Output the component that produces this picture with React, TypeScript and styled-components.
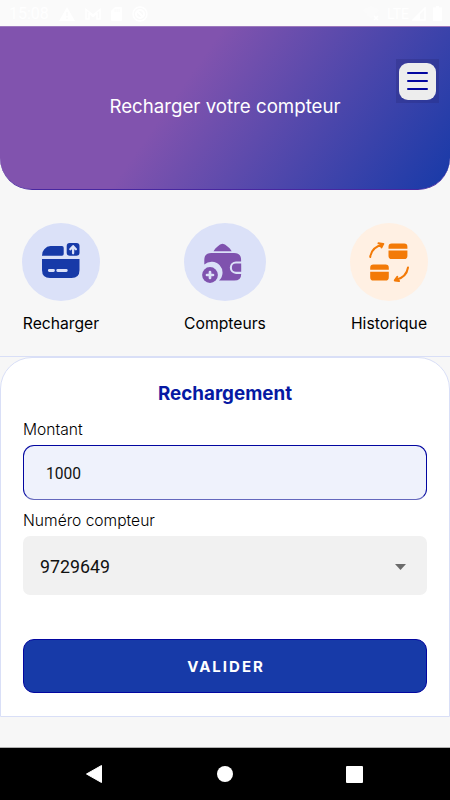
import React from "react";
import styled, { createGlobalStyle } from "styled-components";

const GlobalStyle = createGlobalStyle`
  * { box-sizing: border-box; }
  body { margin: 0; background: #f7f7f7; font-family: Inter, "Liberation Sans", sans-serif; color: #111; }
  button, input { font: inherit; }
`;

const Screen = styled.div`
  width: 450px;
  height: 800px;
  display: flex;
  flex-direction: column;
  background: #f7f7f7;
  overflow: hidden;
`;

const StatusBar = styled.div`
  height: 26px;
  flex: none;
  display: flex;
  align-items: center;
  justify-content: space-between;
  padding: 1px 8px 0 9px;
  background: #fafafa;
  color: #fff;
  font: 16px/26px Roboto, sans-serif;
`;

const StatusGroup = styled.div<{ $gap: number }>`
  display: flex;
  align-items: center;
  gap: ${(p) => p.$gap}px;
`;

const Clock = styled.span`
  margin-right: 0;
`;

const Network = styled.span`
  font-size: 14px;
  margin-right: -4px;
`;

const Header = styled.header`
  height: 164px;
  flex: none;
  display: grid;
  grid-template-columns: 54px 1fr 54px;
  background: linear-gradient(125deg, #8153ae 39.7%, #173aa8 100%);
  border-top: 1px solid #9c79bd;
  border-bottom: 1px solid #4827a0;
  border-radius: 0 0 32px 32px;
`;

const HeaderTitle = styled.h1`
  grid-column: 2;
  margin: 67px 0 0;
  text-align: center;
  font-size: 18.7px;
  line-height: 26px;
  font-weight: 400;
  color: #fff;
  white-space: nowrap;
`;

const MenuShade = styled.div`
  width: 43px;
  height: 44px;
  margin-top: 32px;
  display: grid;
  place-items: center;
  background: rgba(40, 40, 120, 0.3);
`;

const MenuButton = styled.button`
  width: 37px;
  height: 37px;
  padding: 0;
  border: 0;
  border-radius: 9px;
  background: #ededed;
  display: flex;
  flex-direction: column;
  align-items: center;
  justify-content: center;
  gap: 6px;
`;

const MenuLine = styled.span`
  width: 21px;
  height: 2px;
  border-radius: 1px;
  background: #0206a0;
`;

const Actions = styled.nav`
  height: 167px;
  flex: none;
  display: flex;
  justify-content: space-between;
  align-items: flex-start;
  padding: 33px 22px 0;
  border-bottom: 1px solid #d9dff7;
`;

const Action = styled.div<{ $width: number }>`
  width: ${(p) => p.$width}px;
  display: flex;
  flex-direction: column;
  align-items: center;
`;

const ActionIcon = styled.div<{ $bg: string }>`
  width: 100%;
  height: 78px;
  border-radius: 50%;
  background: ${(p) => p.$bg};
  svg { display: block; width: 100%; height: 78px; }
`;

const ActionLabel = styled.span`
  margin-top: 12px;
  font-size: 15.7px;
  line-height: 22px;
  white-space: nowrap;
  color: #000;
`;

const Card = styled.section`
  height: 360px;
  flex: none;
  display: flex;
  flex-direction: column;
  padding: 0 22px;
  background: #fff;
  border: 1px solid #d9dff7;
  border-radius: 32px 32px 0 0;
`;

const CardTitle = styled.h2`
  margin: 23px 0 0;
  text-align: center;
  font-size: 18.8px;
  line-height: 26px;
  font-weight: 700;
  color: #0619a3;
`;

const Label = styled.label<{ $top: number }>`
  margin-top: ${(p) => p.$top}px;
  font-size: 15.6px;
  line-height: 22px;
  font-weight: 300;
  color: #000;
`;

const AmountInput = styled.input`
  height: 55px;
  width: 100%;
  margin-top: 4px;
  padding: 2px 22px 0;
  border: 1px solid #0206a0;
  border-bottom-color: #6468bd;
  border-radius: 11px;
  outline: 0;
  background: #eff2fc;
  font: 400 15.6px Roboto, sans-serif;
  color: #111;
`;

const MeterSelect = styled.div`
  height: 59px;
  margin-top: 4px;
  padding: 2px 21px 0 17px;
  display: flex;
  align-items: center;
  justify-content: space-between;
  border-radius: 7px;
  background: #f1f1f1;
  font: 17.8px Roboto, sans-serif;
  color: #111;
`;

const SubmitButton = styled.button`
  height: 54px;
  margin-top: 44px;
  padding: 0 0 0 2px;
  border: 1px solid #0206a0;
  border-radius: 11px;
  background: #173aa8;
  color: #fff;
  font-size: 15px;
  font-weight: 700;
  letter-spacing: 2px;
`;

const NavBar = styled.footer`
  height: 53px;
  margin-top: auto;
  flex: none;
  display: flex;
  align-items: center;
  justify-content: space-between;
  padding: 0 87px 0 85px;
  background: #000;
  border-top: 1px solid #b0b0b0;
`;

const WarningIcon = () => (
  <svg width="16" height="14" viewBox="0 0 16 14">
    <path d="M8 0L16 14H0Z" fill="#fff" />
    <path d="M8 5v4M8 10.500v1.500" stroke="#fafafa" strokeWidth="1.500" />
  </svg>
);

const MailIcon = () => (
  <svg width="16" height="12" viewBox="0 0 16 12" fill="none" stroke="#fff" strokeWidth="1.500">
    <path d="M1 11V1.500L8 7l7-5.500V11h-3V5L8 8.500 4 5v6Z" />
  </svg>
);

const CardIcon = () => (
  <svg width="11" height="14" viewBox="0 0 11 14">
    <path d="M4 0h6a1 1 0 011 1v12a1 1 0 01-1 1H1a1 1 0 01-1-1V4Z" fill="#fff" />
    <path d="M4 2v3M6 2v3M8 2v3" stroke="#fafafa" />
  </svg>
);

const BlockIcon = () => (
  <svg width="16" height="16" viewBox="0 0 16 16" fill="none" stroke="#fff">
    <circle cx="8" cy="8" r="7" strokeWidth="1.500" />
    <circle cx="8" cy="8" r="4" strokeWidth="2" />
    <path d="M5 5l6 6" strokeWidth="2" />
  </svg>
);

const WifiIcon = () => (
  <svg width="17" height="15" viewBox="0 0 17 15">
    <path d="M0 4Q8 -3 16 4L8 13Z" fill="#fbfbfb" />
    <path d="M11 10l4 4M15 10l-4 4" stroke="#fff" strokeWidth="1.500" />
  </svg>
);

const SignalIcon = () => (
  <svg width="14" height="14" viewBox="0 0 14 14">
    <path d="M13 1V13H1Z" fill="none" stroke="#fff" strokeWidth="1.500" />
    <path d="M8 6V13H1Z" fill="#fff" />
  </svg>
);

const BatteryIcon = () => (
  <svg width="9" height="15" viewBox="0 0 9 15">
    <path d="M3 0h3v1.500h3V15H0V1.500h3Z" fill="#fff" />
  </svg>
);

const RechargeIcon = () => (
  <svg viewBox="0 0 78 78">
    <g fill="#173aa8">
      <path d="M20 32.700Q20 28.500 22.300 26.200 25 23 28.500 23H40q1.700 0 1.700 1.700v6.300q0 1.700-1.700 1.700Z" />
      <rect x="44.700" y="20" width="12.800" height="12.700" rx="3" />
      <path d="M20 36h37.500v11q0 8-8 8H28q-8 0-8-8Z" />
    </g>
    <path d="M51.100 30.300v-6.500M48.300 26.200l2.800-3 2.800 3" fill="none" stroke="#dbe1f8" strokeWidth="2.300" strokeLinecap="round" strokeLinejoin="round" />
    <path d="M27.300 47.500h4.200M35.700 47.500h8.600" stroke="#dbe1f8" strokeWidth="2.800" strokeLinecap="round" />
  </svg>
);

const WalletIcon = () => (
  <svg viewBox="0 0 82 78">
    <path d="M29.500 28.200Q31.200 25.200 33.600 23.600 36 20.800 38.500 20.800T43.500 23.600Q46 25.200 47.700 28.200Z" fill="#7f52ae" />
    <path d="M20.300 41.500V37q0-7 7-7h22.800q7 0 7 7v1.500H52a6.200 6.200 0 000 12.400h5.200q0 6.700-7 6.700H35A10.500 10.500 0 0020.300 41.500Z" fill="#7f52ae" />
    <path d="M57.200 40.600H52a4.100 4.100 0 000 8.200h5.200Z" fill="#7f52ae" />
    <circle cx="26" cy="52" r="9.800" fill="#dbe1f8" />
    <circle cx="26" cy="52" r="7.900" fill="#7f52ae" />
    <path d="M26 49v6M23 52h6" stroke="#dbe1f8" strokeWidth="2.700" strokeLinecap="round" />
  </svg>
);

const HistoryIcon = () => (
  <svg viewBox="0 0 78 78">
    <g fill="#f37a07">
      <path d="M38.500 25.700v-2q0-3.200 3.200-3.200h12.500q3.200 0 3.200 3.200v2ZM38.500 27.600h18.900v5.300q0 3.100-3.200 3.100H41.700q-3.200 0-3.200-3.100Z" />
      <path d="M20.200 46.700v-2q0-3.200 3.200-3.200h12.200q3.200 0 3.200 3.200v2ZM20.200 48.700h18.600v5.500q0 3.400-3.200 3.400H23.400q-3.200 0-3.200-3.400Z" />
    </g>
    <g fill="none" stroke="#f37a07" strokeWidth="2" strokeLinecap="round" strokeLinejoin="round">
      <path d="M20.200 34Q21.500 24 33 21.500M28.500 20.300l4.800.6-1.800 3.500" />
      <path d="M58 44.500Q56.500 54.500 45.500 57M47.300 53.800l-2.500 3.600 4.200.6" />
    </g>
  </svg>
);

const actions = [
  { label: "Recharger", width: 78, bg: "#dbe1f8", Icon: RechargeIcon },
  { label: "Compteurs", width: 82, bg: "#dbe1f8", Icon: WalletIcon },
  { label: "Historique", width: 78, bg: "#fff0e3", Icon: HistoryIcon },
];

export default function App() {
  return (
    <>
      <GlobalStyle />
      <Screen>
        <StatusBar>
          <StatusGroup $gap={10}>
            <Clock>15:08</Clock>
            <WarningIcon />
            <MailIcon />
            <CardIcon />
            <BlockIcon />
          </StatusGroup>
          <StatusGroup $gap={7}>
            <WifiIcon />
            <Network>LTE</Network>
            <SignalIcon />
            <BatteryIcon />
          </StatusGroup>
        </StatusBar>
        <Header>
          <HeaderTitle>Recharger votre compteur</HeaderTitle>
          <MenuShade>
            <MenuButton aria-label="Menu">
              <MenuLine />
              <MenuLine />
              <MenuLine />
            </MenuButton>
          </MenuShade>
        </Header>
        <Actions>
          {actions.map(({ label, width, bg, Icon }) => (
            <Action key={label} $width={width}>
              <ActionIcon $bg={bg}>
                <Icon />
              </ActionIcon>
              <ActionLabel>{label}</ActionLabel>
            </Action>
          ))}
        </Actions>
        <Card>
          <CardTitle>Rechargement</CardTitle>
          <Label $top={12} htmlFor="amount">Montant</Label>
          <AmountInput id="amount" defaultValue="1000" />
          <Label $top={10}>Numéro compteur</Label>
          <MeterSelect>
            9729649
            <svg width="11" height="6" viewBox="0 0 11 6">
              <path d="M0 0h11L5.500 6Z" fill="#6b6b6b" />
            </svg>
          </MeterSelect>
          <SubmitButton>VALIDER</SubmitButton>
        </Card>
        <NavBar>
          <svg width="19" height="18" viewBox="0 0 19 18">
            <path d="M16.500 .500v17L1.500 9Z" fill="#fff" stroke="#fff" strokeLinejoin="round" />
          </svg>
          <svg width="16" height="16" viewBox="0 0 16 16">
            <circle cx="8" cy="8" r="8" fill="#fff" />
          </svg>
          <svg width="17" height="17" viewBox="0 0 17 17">
            <rect width="17" height="17" rx="1" fill="#fff" />
          </svg>
        </NavBar>
      </Screen>
    </>
  );
}
